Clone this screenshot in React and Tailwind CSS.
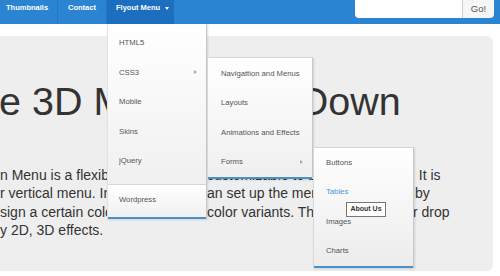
import React from 'react';

const font = "font-['Liberation_Sans',Arial,sans-serif]";

// Flyout rows
const Row = ({ label, arrow, active, pad = 'pl-[11px]' }) => (
    <div className={`relative flex h-[29.5px] items-center ${pad} text-[7.7px] ${active ? 'text-[#4a9bd5]' : 'text-[#555]'}`}>
        {label}
        {arrow && (
            <span className="absolute right-[9px] top-[12px] h-0 w-0 border-y-[2.5px] border-l-[3px] border-y-transparent border-l-[#aaa]" />
        )}
    </div>
);

const Line = ({ parts }) => (
    <div className="flex whitespace-nowrap">
        <span className="w-[207px] shrink-0 overflow-hidden">{parts[0]}</span>
        <span className="w-[106px] shrink-0 overflow-hidden">{parts[1]}</span>
        <span className={`${parts[4] || 'w-[101px]'} shrink-0 overflow-hidden`}>{parts[2]}</span>
        <span className="pl-[1px]">{parts[3]}</span>
    </div>
);

const App = () => {
    return (
        <div className={`relative h-[276px] w-[500px] overflow-hidden bg-white ${font}`}>
            {/* Navbar */}
            <div className="flex h-[24px] items-start bg-[#2a84d2]">
                <div className="flex h-full text-[7.5px] font-bold leading-[10px] text-white">
                    <div className="h-full w-[58px] border-r border-[#2277c6] pl-[6px] pt-[3px]">Thumbnails</div>
                    <div className="h-full w-[49px] border-r border-[#2277c6] pl-[10px] pt-[3px]">Contact</div>
                    <div className="flex h-full w-[67px] items-start bg-[#1c6ebf] pl-[9px] pt-[3px]">
                        Flyout Menu
                        <span className="ml-[5px] mt-[3.5px] h-0 w-0 border-x-[2.5px] border-t-[3px] border-x-transparent border-t-white" />
                    </div>
                </div>
                <div className="flex-1" />
                <div className="mr-[6px] flex h-[18px]">
                    <div className="w-[107px] rounded-bl-[4px] bg-white" />
                    <div className="flex w-[32px] items-center justify-center rounded-br-[4px] border-l border-[#cfcfcf] bg-[#f6f6f6] text-[9.5px] text-[#555]">Go!</div>
                </div>
            </div>

            {/* Jumbotron */}
            <div className="mt-[12px] h-[235px] w-[493px] overflow-hidden rounded-r-[6px] bg-[#eeeeee] text-[#333]">
                <h1 className="-ml-px mt-[45.6px] whitespace-nowrap text-[39.5px] font-normal leading-none">e 3D Mega Drop Down</h1>
                <div className="mt-[45px] text-[14px] leading-[18.3px]">
                    <Line parts={['n Menu is a flexible and fully', 'customizable to build your', 'navigation menu', 's. It is', 'w-[90px]']} />
                    <Line parts={['r vertical menu. In addition, you c', 'an set up the menu', 'easily as you want just', 'by']} />
                    <Line parts={['sign a certain color scheme to the', 'color variants. The', 're are effects fo', 'r drop', 'w-[99px]']} />
                    <div className="whitespace-nowrap">y 2D, 3D effects.</div>
                </div>
            </div>

            {/* Flyout level 1 */}
            <div className="absolute left-[107px] top-[24px] w-[100px] border-x border-l-[#e2e2e2] border-r-[#c8c8c8] shadow-[1px_1px_2px_rgba(0,0,0,0.12)]">
                <div className="bg-linear-to-b from-white to-[#f0f0f0] pt-[4.25px] pb-[8.25px]">
                    <Row label="HTML5" />
                    <Row label="CSS3" arrow />
                    <Row label="Mobile" />
                    <Row label="Skins" />
                    <Row label="jQuery" />
                </div>
                <div className="border-t border-[#d6d6d6] bg-linear-to-b from-white to-[#f0f0f0] pb-[2px]">
                    <Row label="Wordpress" />
                </div>
                <div className="h-[2px] bg-[#4a90c9]" />
            </div>

            {/* Flyout level 2 */}
            <div className="absolute left-[207px] top-[57px] w-[106px] border-x border-t border-[#d8d8d8] border-r-[#c8c8c8] bg-linear-to-b from-white to-[#efefef] pt-[1px] shadow-[1px_1px_2px_rgba(0,0,0,0.12)]">
                <Row label="Navigattion and Menus" pad="pl-[13px]" />
                <Row label="Layouts" pad="pl-[13px]" />
                <Row label="Animations and Effects" pad="pl-[13px]" />
                <Row label="Forms" arrow pad="pl-[13px]" />
                <div className="h-[2px] bg-[#4a90c9]" />
            </div>

            {/* Flyout level 3 */}
            <div className="absolute left-[313px] top-[147px] w-[101px] border-x border-t border-[#d8d8d8] border-r-[#c8c8c8] bg-linear-to-b from-white to-[#ececec] shadow-[1px_1px_2px_rgba(0,0,0,0.12)]">
                <Row label="Buttons" pad="pl-[12px]" />
                <Row label="Tables" active pad="pl-[12px]" />
                <Row label="Images" pad="pl-[12px]" />
                <Row label="Charts" pad="pl-[12px]" />
                <div className="h-[2px] bg-[#4a90c9]" />
            </div>

            {/* Tooltip */}
            <div className="absolute left-[346px] top-[202px] flex h-[15px] w-[40px] items-center justify-center border border-[#767676] bg-white text-[7px] font-bold text-[#333]">
                About Us
            </div>
        </div>
    );
};

export default App;
